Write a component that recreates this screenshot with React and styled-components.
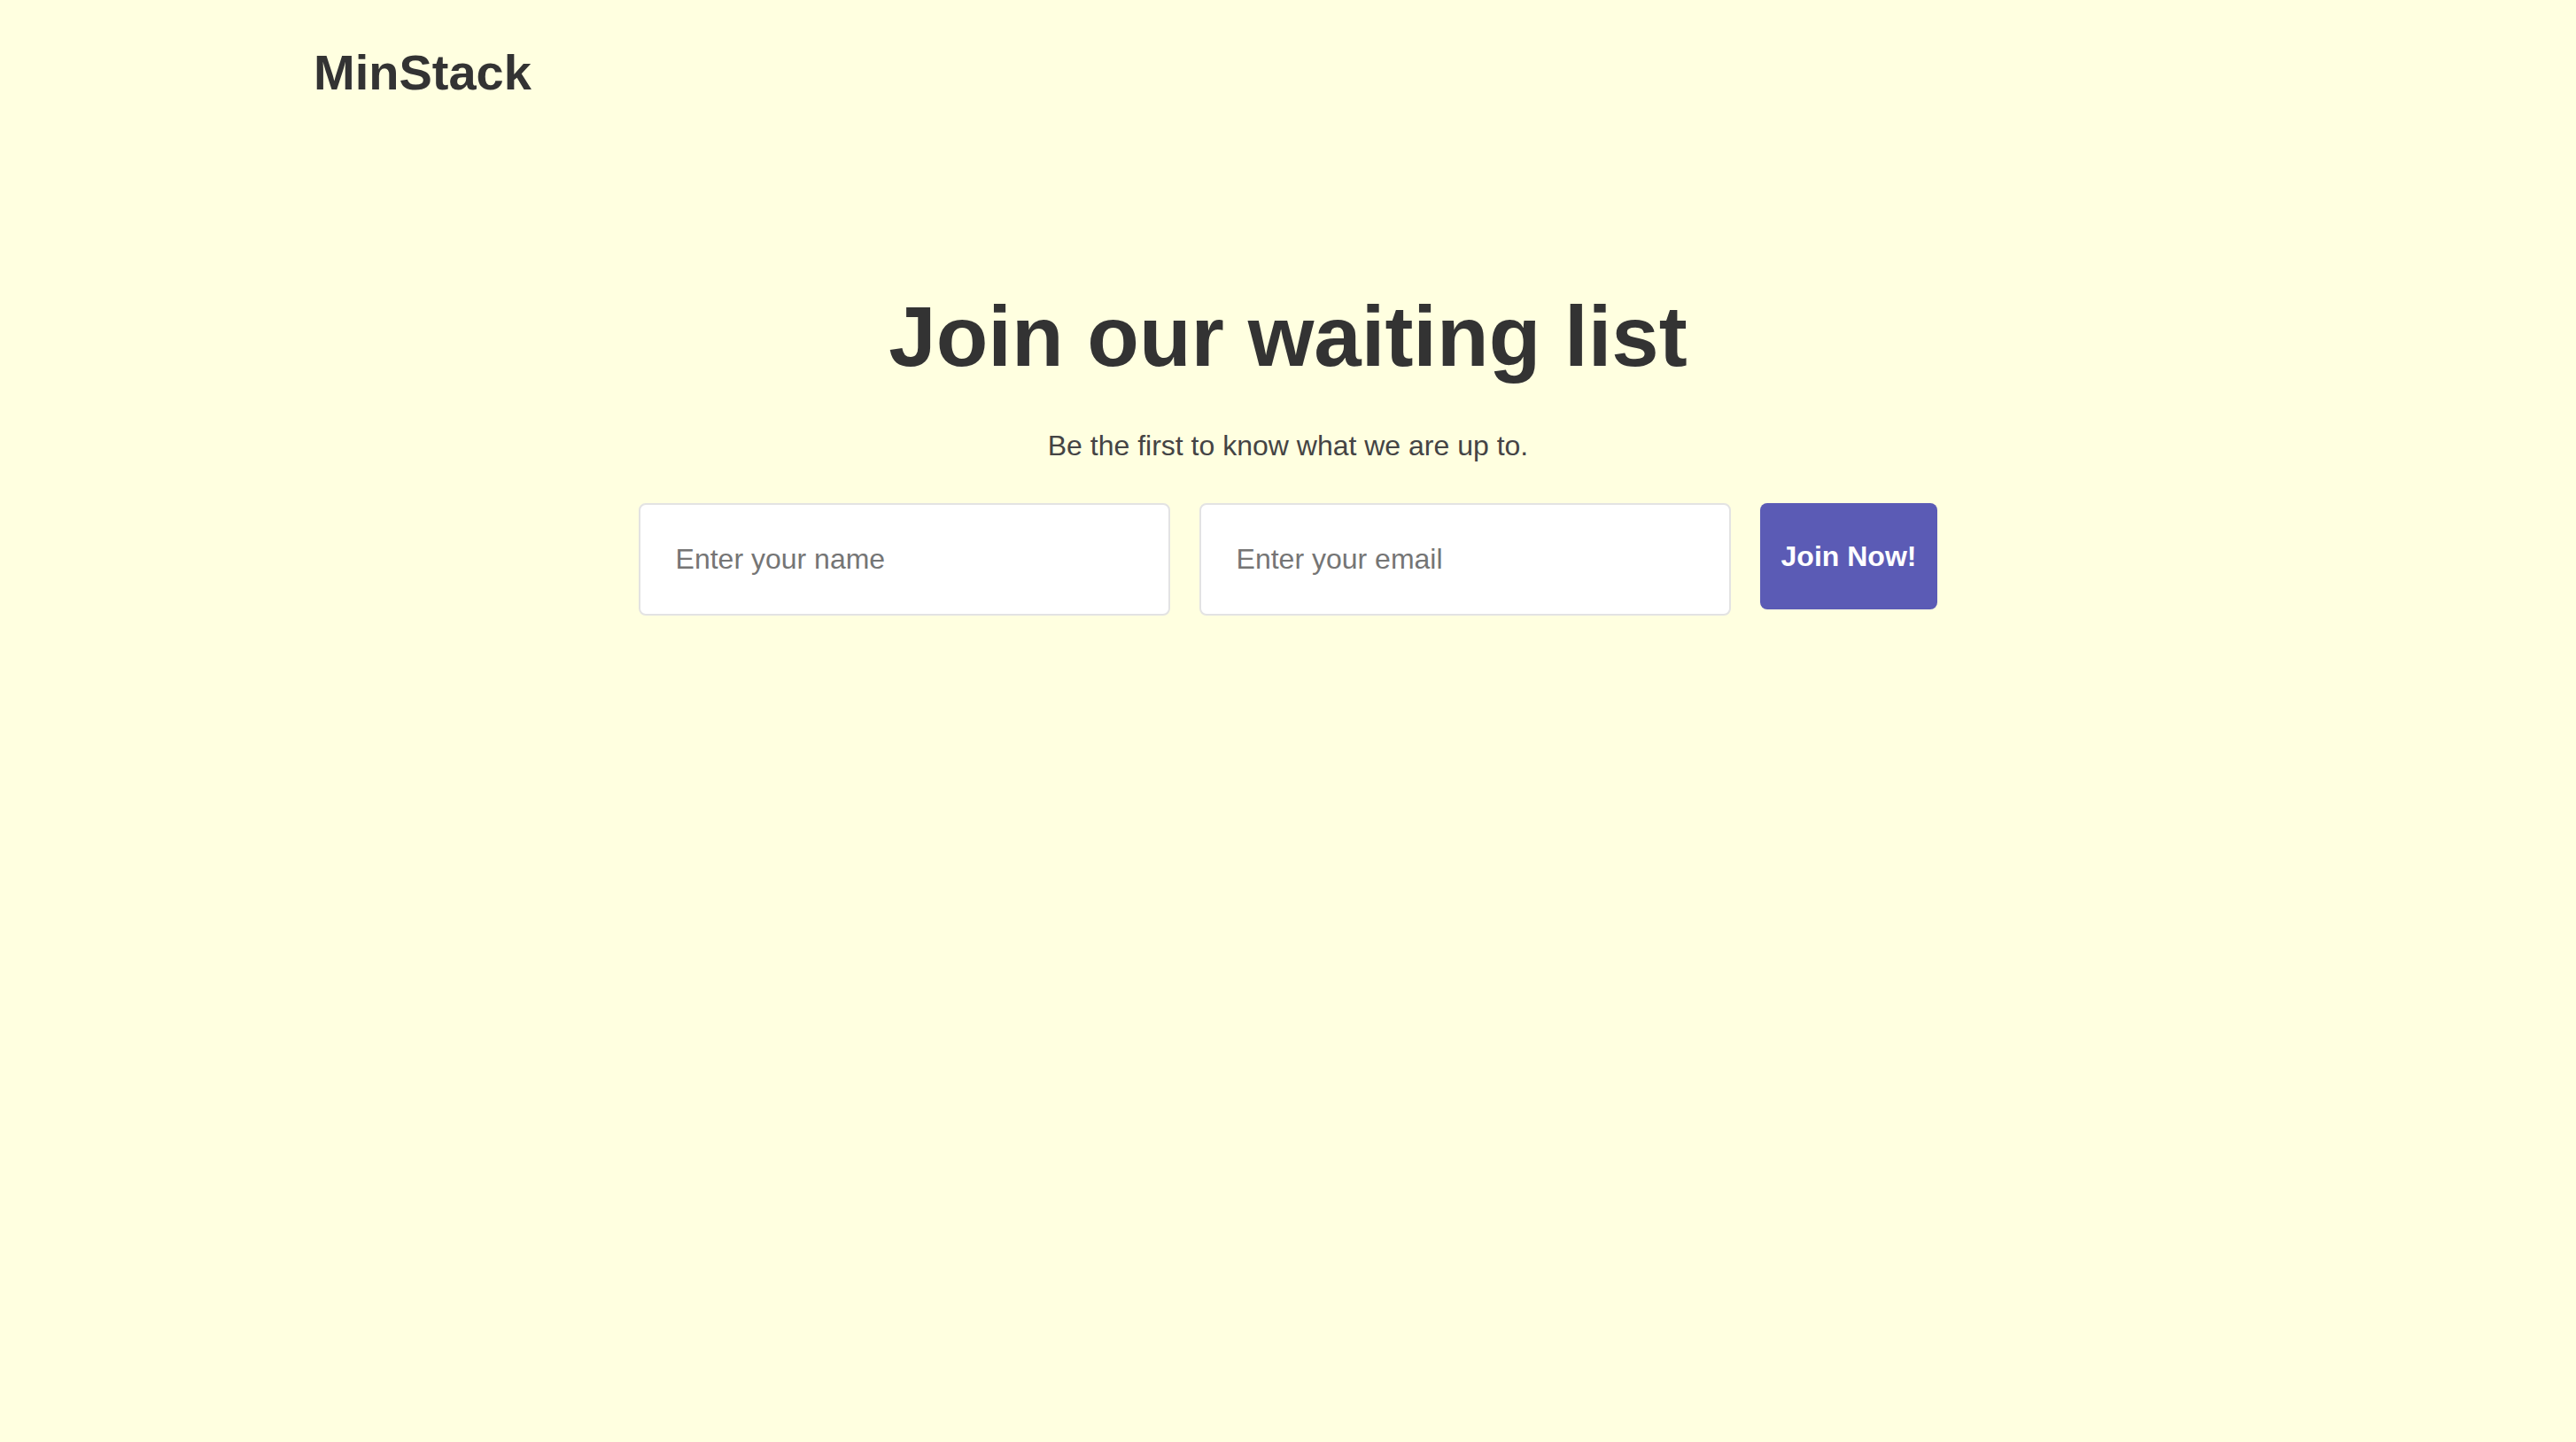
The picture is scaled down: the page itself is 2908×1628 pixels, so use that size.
import React from 'react'
import styled, { createGlobalStyle } from 'styled-components'

const GlobalStyle = createGlobalStyle `
  html, body {
    margin: 0;
    padding: 0;
    background: #ffffe0;
  }
  body {
    min-height: 1628px;
    font-family: "Liberation Sans", Arial, Helvetica, sans-serif;
    color: #333333;
  }
`;

const Page = styled.div `
  min-height: 1628px;
  background: #ffffe0;
`;

const Header = styled.header `
  max-width: 2200px;
  margin: 0 auto;
  padding-top: 54px;
`;

const Logo = styled.div `
  font-size: 56px;
  line-height: 56px;
  font-weight: 700;
  color: #333333;
`;

const Main = styled.main `
  display: flex;
  flex-direction: column;
  align-items: center;
  padding-top: 222px;
`;

const Title = styled.h1 `
  margin: 0;
  font-size: 96px;
  line-height: 96px;
  font-weight: 700;
  color: #333333;
`;

const Subtitle = styled.p `
  margin: 59px 0 0;
  font-size: 32px;
  line-height: 32px;
  color: #444444;
`;

const Form = styled.form `
  display: flex;
  align-items: flex-start;
  gap: 33px;
  margin-top: 49px;
`;

const Input = styled.input `
  box-sizing: border-box;
  width: 600px;
  height: 127px;
  padding: 0 40px;
  border: 2px solid #e3e3e3;
  border-radius: 8px;
  background: #ffffff;
  font-family: "Liberation Sans", Arial, sans-serif;
  font-size: 32px;
  color: #333333;
  outline: none;

  &::placeholder {
    color: #757575;
  }
`;

const Button = styled.button `
  box-sizing: border-box;
  height: 120px;
  padding: 0 24px;
  border: none;
  border-radius: 8px;
  background: #5b5bb5;
  color: #ffffff;
  font-family: "Liberation Sans", Arial, sans-serif;
  font-size: 32px;
  font-weight: 700;
  cursor: pointer;
`;

export default function App() {
  return (
    <Page>
      <GlobalStyle />
      <Header>
        <Logo>MinStack</Logo>
      </Header>
      <Main>
        <Title>Join our waiting list</Title>
        <Subtitle>Be the first to know what we are up to.</Subtitle>
        <Form onSubmit={(e) => e.preventDefault()}>
          <Input type='text' placeholder='Enter your name' />
          <Input type='email' placeholder='Enter your email' />
          <Button type='submit'>Join Now!</Button>
        </Form>
      </Main>
    </Page>
  )
}
